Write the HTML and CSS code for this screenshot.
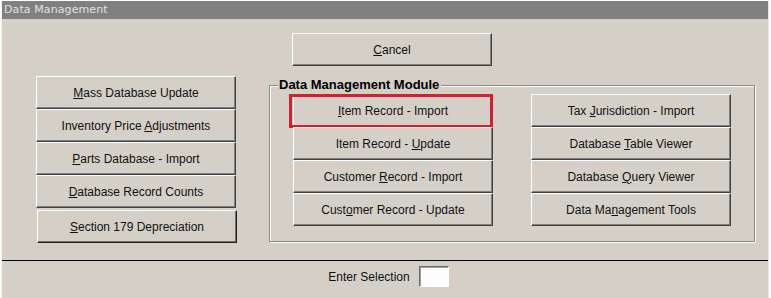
FILE: index.html
```html
<!DOCTYPE html>
<html>
<head>
<meta charset="utf-8">
<link rel="stylesheet" href="styles.css">
</head>
<body>
<div class="window">
  <div class="titlebar">Data Management</div>
  <div class="content">
    <div class="cancel-row">
      <button class="btn"><u>C</u>ancel</button>
    </div>
    <div class="main-row">
      <div class="col col-left">
        <button class="btn"><u>M</u>ass Database Update</button>
        <button class="btn">Inventory Price <u>A</u>djustments</button>
        <button class="btn"><u>P</u>arts Database - Import</button>
        <button class="btn"><u>D</u>atabase Record Counts</button>
        <button class="btn btn-default"><u>S</u>ection 179 Depreciation</button>
      </div>
      <div class="group">
        <div class="legend">Data Management Module</div>
        <div class="group-cols">
          <div class="col">
            <button class="btn btn-selected"><u>I</u>tem Record - Import</button>
            <button class="btn">Item Record - <u>U</u>pdate</button>
            <button class="btn">Customer <u>R</u>ecord - Import</button>
            <button class="btn">Cust<u>o</u>mer Record - Update</button>
          </div>
          <div class="col">
            <button class="btn">Tax <u>J</u>urisdiction - Import</button>
            <button class="btn">Database <u>T</u>able Viewer</button>
            <button class="btn">Database <u>Q</u>uery Viewer</button>
            <button class="btn">Data Ma<u>n</u>agement Tools</button>
          </div>
        </div>
      </div>
    </div>
  </div>
  <div class="footer">
    <span class="label">Enter Selection</span>
    <input class="sel-input" type="text">
  </div>
</div>
</body>
</html>
```
FILE: styles.css
```css
html, body {
  margin: 0;
  padding: 0;
  background: #ffffff;
}
body {
  font-family: "Liberation Sans", Arial, sans-serif;
  font-size: 12px;
  color: #000;
}
.window {
  width: 766px;
  height: 297px;
  margin-top: 1px;
  border-left: 1px solid #f4f3f0;
  border-right: 1px solid #e8e6e2;
  margin-left: 1px;
  background: #d4d0c8;
  display: flex;
  flex-direction: column;
}
.titlebar {
  height: 18px;
  background: #818081;
  color: #e0e0e0;
  font-family: "DejaVu Sans", sans-serif;
  font-size: 11px;
  line-height: 18px;
  padding-left: 2px;
  letter-spacing: 0.1px;
}
.content {
  height: 242px;
  padding-left: 34px;
  box-sizing: border-box;
  border-bottom: 1px solid #000;
}
.cancel-row {
  padding-top: 14px;
  padding-left: 256px;
}
.btn {
  display: block;
  width: 200px;
  height: 33px;
  margin: 0;
  padding: 0;
  font-family: "Liberation Sans", Arial, sans-serif;
  font-size: 12px;
  color: #111;
  background: #d4d0c8;
  border: 1px solid;
  border-color: #ffffff #404040 #404040 #ffffff;
  box-shadow: inset -1px -1px 0 #808080;
  text-align: center;
  position: relative;
}
.btn u {
  text-decoration: underline;
  text-underline-offset: 1px;
}
.main-row {
  display: flex;
  margin-top: 10px;
}
.col-left {
  display: flex;
  flex-direction: column;
}
.btn-default {
  margin-top: 2px;
  margin-left: 1px;
  border-color: #ffffff #202020 #202020 #ffffff;
  box-shadow: inset -1px -1px 0 #707070;
}
.group {
  margin-left: 32px;
  margin-top: 9px;
  width: 486px;
  height: 157px;
  box-sizing: border-box;
  border: 1px solid #8c8a86;
  box-shadow: inset 1px 1px 0 #ffffff, 1px 1px 0 #ffffff;
  padding: 0 0 0 23px;
}
.legend {
  font-family: "Liberation Sans", Arial, sans-serif;
  font-weight: bold;
  font-size: 13px;
  line-height: 14px;
  height: 14px;
  margin: -8px 0 -6px -15px;
  padding: 0 2px 0 1px;
  background: #d4d0c8;
  width: max-content;
}
.group-cols {
  display: flex;
  gap: 38px;
  padding-top: 8px;
}
.col {
  display: flex;
  flex-direction: column;
}
.btn-selected::after {
  content: "";
  position: absolute;
  left: -5px;
  top: -1px;
  right: -1px;
  bottom: -2px;
  border: 3px solid #d4202e;
}
.footer {
  flex: 1;
  display: flex;
  align-items: center;
  justify-content: center;
  gap: 9px;
  padding-left: 7px;
  padding-bottom: 6px;
}
.label {
  font-family: "Liberation Sans", Arial, sans-serif;
  font-size: 12px;
  color: #111;
}
.sel-input {
  width: 30px;
  height: 21px;
  box-sizing: border-box;
  margin: 0;
  padding: 0;
  background: #fdfdfd;
  border: 1px solid;
  border-color: #6a6a6a #ffffff #ffffff #6a6a6a;
  box-shadow: inset 1px 1px 0 #a0a0a0;
}
```
